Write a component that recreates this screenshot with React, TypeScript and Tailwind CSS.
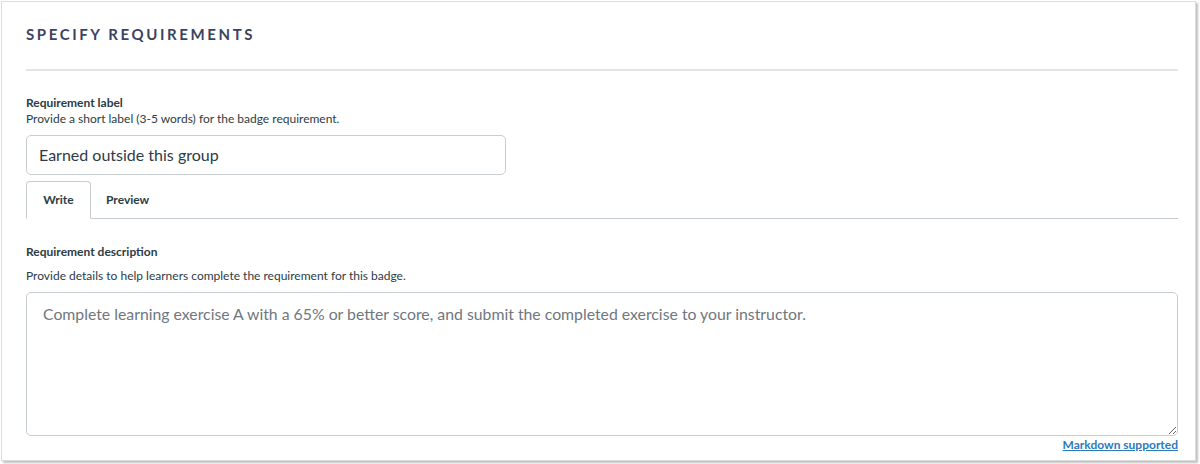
export default function App() {
  return (
    <div className="h-[464px] w-[1200px] bg-white" style={{ fontFamily: "Lato, 'Noto Sans', sans-serif" }}>
      <div className="ml-[1px] mt-[1px] h-[460px] w-[1195px] border border-[#dcdcdc] bg-white pl-[24px] pr-[17px] pt-[22px] shadow-[2px_2px_2px_rgba(0,0,0,0.25)]">
        {/* Header */}
        <h2 className="text-[15px] font-bold uppercase leading-[20px] tracking-[2.6px] text-[#3b4360]">
          Specify Requirements
        </h2>
        <div className="mt-[25px] h-[2px] bg-[#e4e4e8]" />

        {/* Requirement label */}
        <div className="mt-[24px] text-[12px] font-bold leading-[16px] text-[#2d3b45]">Requirement label</div>
        <div className="text-[12px] leading-[16px] text-[#2d3b45]">
          Provide a short label (3-5 words) for the badge requirement.
        </div>
        <div className="mt-[8px] flex h-[40px] w-[480px] items-center rounded-[5px] border border-[#c7cdd1] px-[12px] text-[16px] text-[#2d3b45]">
          Earned outside this group
        </div>

        {/* Tabs */}
        <div className="mt-[6px] flex h-[38px] items-stretch border-b border-[#c7cdd1]">
          <div className="-mb-px flex w-[65px] items-center justify-center rounded-t-[4px] border border-b-white border-[#c7cdd1] bg-white text-[12px] font-bold text-[#2d3b45]">
            Write
          </div>
          <div className="flex items-center px-[15px] text-[12px] font-bold text-[#2d3b45]">Preview</div>
        </div>

        {/* Requirement description */}
        <div className="mt-[25px] text-[12px] font-bold leading-[16px] text-[#2d3b45]">Requirement description</div>
        <div className="mt-[8px] text-[12px] leading-[16px] text-[#2d3b45]">
          Provide details to help learners complete the requirement for this badge.
        </div>
        <textarea
          className="mt-[8px] block h-[144px] w-full resize-y rounded-[5px] border border-[#c7cdd1] px-[16px] py-[10px] text-[15.8px] leading-[22px] text-[#2d3b45] outline-none placeholder:text-[#6f7780]"
          placeholder="Complete learning exercise A with a 65% or better score, and submit the completed exercise to your instructor."
        />
        <div className="flex justify-end">
          <a href="#" className="text-[12px] font-bold leading-[17px] text-[#2b7abc] underline">
            Markdown supported
          </a>
        </div>
      </div>
    </div>
  );
}
